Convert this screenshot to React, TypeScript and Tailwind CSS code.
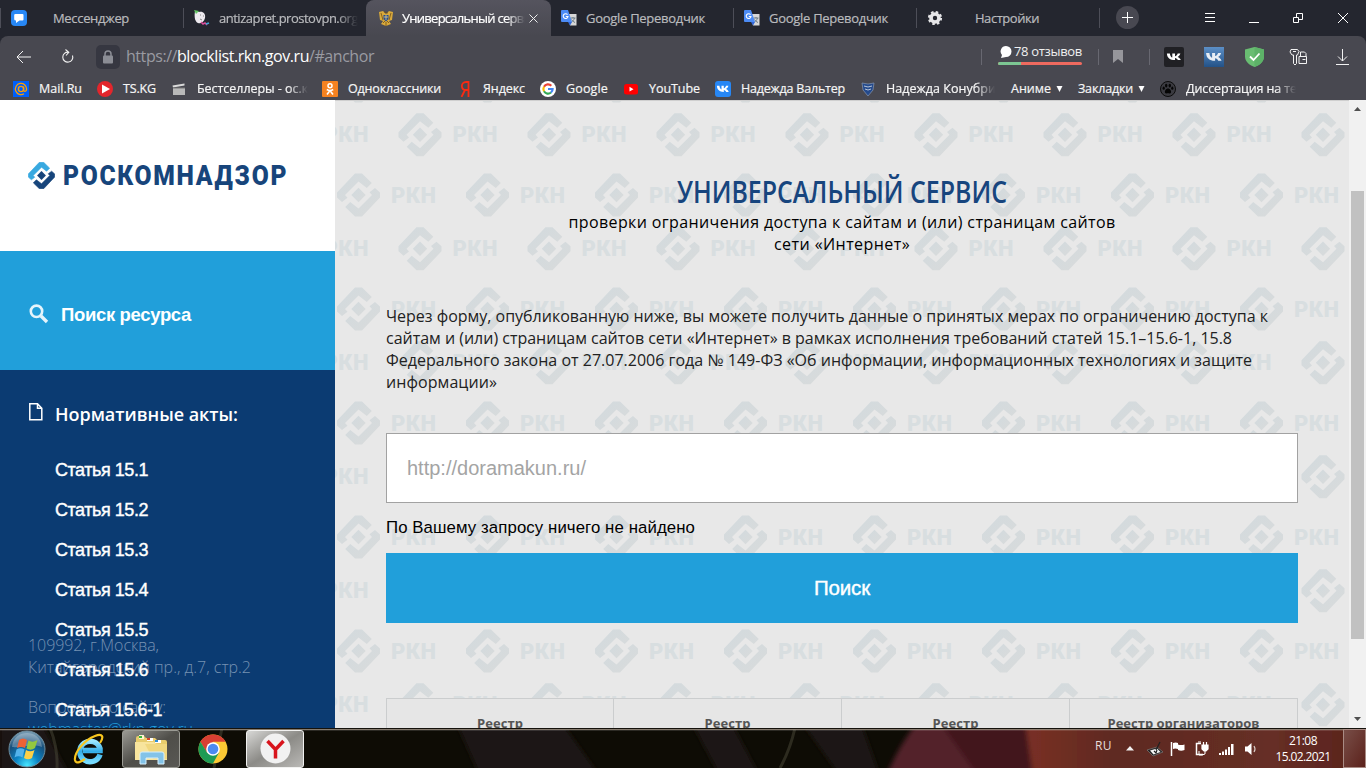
import { useLayoutEffect, useRef, useState } from "react";
import type { ReactNode } from "react";

const MARK_TOP = "M-16.5 7L-21.5 2.5V-2.5L-3.5-21.5H3.5L13.3-12L8.3-7L0-13.5L-13.5 0L-11 2.8Z";
const MARK_BOTTOM = "M16.5-7L21.5-2.5V2.5L3.5 21.5H-3.5L-13.3 12L-8.3 7L0 13.5L13.5 0L11-2.8Z";
const MARK_CORE = "M0-7.2L7.2 0L0 7.2L-7.2 0Z";

/* Keeps a label at a fixed width by spreading the difference over its letters. */
function Fit({ w, text, children, className = "" }: { w: number; text: string; children?: ReactNode; className?: string }) {
  const ref = useRef<HTMLSpanElement>(null);
  const [gap, setGap] = useState(0);
  useLayoutEffect(() => {
    if (ref.current) setGap((w - ref.current.getBoundingClientRect().width) / text.length);
  }, []);
  return (
    <span ref={ref} className={`inline-block whitespace-pre ${className}`} style={{ letterSpacing: gap }}>
      {children ?? text}
    </span>
  );
}

function MarkIcon({ className }: { className: string }) {
  return (
    <svg className={className} viewBox="-22 -22 44 44">
      <path d={MARK_TOP} fill="#38a9e0" stroke="#38a9e0" strokeLinejoin="round" />
      <path d={MARK_BOTTOM} fill="#17457b" stroke="#17457b" strokeLinejoin="round" />
      <path d={MARK_CORE} fill="#17457b" />
    </svg>
  );
}

function PatternUnit({ x, y }: { x: number; y: number }) {
  return (
    <g transform={`translate(${x} ${y})`} fill="url(#tint)">
      <path d={MARK_TOP} />
      <path d={MARK_BOTTOM} />
      <path d={MARK_CORE} />
      <text x="32.5" y="7.500" fontFamily="Roboto" fontWeight="900" fontSize="22" textLength="45" fill="#d8dee0">
        РКН
      </text>
    </g>
  );
}

function Backdrop() {
  const rows = [-19, 95, 209, 323, 437, 551];
  const cols = [-1, 0, 1, 2, 3, 4, 5, 6, 7];
  return (
    <svg className="absolute inset-0 h-full w-full" viewBox="0 0 1014 628" preserveAspectRatio="none" aria-hidden="true">
      <defs>
        <linearGradient id="tint" x1="0" y1="0" x2="1" y2="1">
          <stop offset="0" stopColor="#d2dade" />
          <stop offset="1" stopColor="#d9dbdb" />
        </linearGradient>
      </defs>
      {rows.map((y) =>
        cols.map((c) => (
          <g key={`${y}-${c}`}>
            <PatternUnit x={23.5 + c * 129} y={y} />
            <PatternUnit x={85 + c * 129} y={y + 53.8} />
          </g>
        ))
      )}
      <path d="M0 .5H1014" stroke="#cfcfcf" />
    </svg>
  );
}

const Translate = () => (
  <svg className="h-4 w-4 shrink-0" viewBox="0 0 16 16">
    <path d="M6 4h9.5v11.5H9z" fill="#d7d7d7" />
    <path d="M9.5 8h5M12 7v1M13.5 8c-.5 2-2 3.500-3 4M10.500 9.500c1 1.500 2 2.300 3.500 3" stroke="#6d7c86" fill="none" />
    <path d="M1 0h6l4 12H1a1 1 0 0 1-1-1V1a1 1 0 0 1 1-1z" fill="#4c8bf5" />
    <path d="M7 12h4l-2 3.500z" fill="#3367d6" />
    <path d="M6.500 4.600A2.400 2.400 0 1 0 7 6.500H4.800" stroke="#fff" strokeWidth="1.100" fill="none" />
  </svg>
);

const VkPath = "M2 6h2.200c.1 2 1 3.200 1.800 3.400V6h2v2.300c1-.2 1.700-1.300 2-2.300h2c-.3 1.300-1.100 2.300-2 2.900 1 .5 1.900 1.300 2.300 2.700h-2.200c-.4-1-1.100-1.600-2.100-1.800v1.800C4.600 11.700 2.100 9.800 2 6z";

const TS = ({ className = "" }: { className?: string }) => <span className={`h-5 w-px shrink-0 bg-[#4d4e58] ${className}`} />;

function TabBar() {
  return (
    <div className="flex h-9 items-center bg-[#24262f] text-[13px] text-[#b9babd] [-webkit-text-stroke:0.2px_currentColor]">
      <div className="flex h-full w-[183px] items-center">
        <TS />
        <svg className="ml-[10px] h-4 w-4" viewBox="0 0 16 16">
          <rect width="16" height="16" rx="4" fill="#2787f5" />
          <path d="M4.500 4h7q1 0 1 1v4.500q0 1-1 1H8.500L5 13v-2.500q-1.800 0-1.800-1.200V5Q3.200 4 4.500 4z" fill="#fff" />
        </svg>
        <Fit w={76} text="Мессенджер" className="ml-[26px] pt-px" />
      </div>
      <div className="flex h-full w-[183px] items-center">
        <TS />
        <svg className="ml-[10px] h-4 w-4" viewBox="0 0 16 16">
          <path d="M1 1l4 1c4-1 7 2 6 6s-4 6-7 5S0 7 1 1z" fill="#eeeaf0" />
          <path d="M0 0l5 1-3 3z" fill="#65c665" />
          <path d="M7 12l2 2 2-1 2 2" stroke="#d84b98" strokeWidth="1.500" fill="none" />
          <path d="M12 14l3-1" stroke="#3ca8d8" strokeWidth="1.500" />
          <path d="M6 5h1M9 6h1M6 9l2 1" stroke="#888" />
        </svg>
        <div className="ml-[9px] w-[139px] overflow-hidden pt-px [mask-image:linear-gradient(to_right,#000_85%,transparent)]">
          <Fit w={139} text="antizapret.prostovpn.org" />
        </div>
      </div>
      <div className="flex h-full w-[185px] items-center rounded-t-lg bg-linear-to-b from-[#55545e] to-[#484850] text-white">
        <svg className="ml-3 h-4 w-4" viewBox="0 0 16 16">
          <path d="M8 4L5 1 1 2l1 8 3 1-2 3 5 2 5-2-2-3 3-1 1-8-4-1z" fill="#d9a93b" />
          <path d="M3 3l2 7M13 3l-2 7M8 12v4M5 13l2-2M11 13l-2-2M6 2l4 1" stroke="#6d4e16" strokeWidth=".8" />
          <path d="M5.500 5h5v4L8 11.500 5.500 9z" fill="#234b91" />
          <path d="M8 5v5M6 7h4" stroke="#e9d18a" strokeWidth=".8" />
        </svg>
        <div className="ml-2 w-[123px] overflow-hidden pt-px [mask-image:linear-gradient(to_right,#000_85%,transparent)]">
          <Fit w={129} text="Универсальный серви" />
        </div>
        <svg className="ml-[4px] h-[9px] w-[9px]" viewBox="0 0 9 9">
          <path d="M.5.5l8 8M8.500.5l-8 8" stroke="#eee" />
        </svg>
      </div>
      <div className="flex h-full w-[181px] items-center pl-[10px]">
        <Translate />
        <Fit w={119} text="Google Переводчик" className="ml-[9px] pt-px" />
      </div>
      <div className="flex h-full w-[184px] items-center">
        <TS className="ml-px" />
        <span className="ml-[10px] flex items-center">
          <Translate />
          <Fit w={119} text="Google Переводчик" className="ml-[9px] pt-px" />
        </span>
      </div>
      <div className="flex h-full w-[183px] items-center">
        <TS />
        <svg className="ml-[10px] h-4 w-4" viewBox="-8 -8 16 16">
          <circle r="4" fill="none" stroke="#e6e6e8" strokeWidth="3.600" />
          <circle r="6" fill="none" stroke="#e6e6e8" strokeWidth="2.200" strokeDasharray="2.500 2.212" />
        </svg>
        <Fit w={64} text="Настройки" className="ml-8 pt-px" />
      </div>
      <TS />
      <svg className="ml-4 h-6 w-6" viewBox="0 0 24 24">
        <circle cx="11.500" cy="11.500" r="11.500" fill="#484851" />
        <path d="M6 11.500h11M11.500 6v11" stroke="#fff" />
      </svg>
      <svg className="ml-[64px] h-3 w-[12px]" viewBox="0 0 12 12">
        <path d="M1 1.500h10M1 5.500h10M1 9.500h10" stroke="#fff" />
      </svg>
      <svg className="ml-[33px] h-3 w-[11px]" viewBox="0 0 11 12">
        <path d="M0 10.500h10" stroke="#fff" />
      </svg>
      <svg className="ml-[33px] h-[10px] w-[10px]" viewBox="0 0 10 10">
        <path d="M.5 4.500h5v5h-5zM3.500 4V.5h6v6H6" stroke="#fff" fill="none" />
      </svg>
      <svg className="ml-[35px] h-[10px] w-[10px]" viewBox="0 0 10 10">
        <path d="M0 0l10 10M10 0L0 10" stroke="#fff" />
      </svg>
    </div>
  );
}

function Toolbar() {
  return (
    <div className="flex h-[41px] items-center text-[#f0f0f0]">
      <svg className="ml-[16px] h-[14px] w-[15px]" viewBox="0 0 15 14">
        <path d="M15 7H1M7 1L1 7l6 6" stroke="#f2f2f2" fill="none" />
      </svg>
      <svg className="ml-[30px] h-[15px] w-[13px]" viewBox="0 0 13 15">
        <path d="M11.500 6.500A5 5 0 1 1 7.500 3.200M4.500.5L7.800 3.300 5 6.500" stroke="#f2f2f2" strokeWidth="1.100" fill="none" />
      </svg>
      <div className="ml-[22px] flex h-6 w-6 items-center justify-center rounded-[5px] bg-[#363741]">
        <svg className="h-[14px] w-[12px]" viewBox="0 0 12 14">
          <path d="M3 6V4a3 3 0 0 1 6 0v2" stroke="#8b8d95" strokeWidth="1.500" fill="none" />
          <rect x="1" y="5.500" width="10" height="8" rx="1" fill="#8b8d95" />
        </svg>
      </div>
      <div className="ml-[6px] w-[855px] pb-px text-[16px] leading-6 text-[#9a9ba2]">
        <Fit w={248} text="https://blocklist.rkn.gov.ru/#anchor">
          https://<span className="text-white">blocklist.rkn.gov.ru</span>/#anchor
        </Fit>
      </div>
      <span className="h-4 w-px bg-[#686871]" />
      <div className="ml-4 flex w-[84px] flex-col pb-[5px]">
        <div className="flex h-[17px] items-center gap-[2px]">
          <svg className="ml-[2px] h-3 w-3 shrink-0" viewBox="0 0 12 12">
            <path d="M6 0a5.500 5.500 0 0 1 0 11L1 12l1-3A5.400 5.400 0 0 1 6 0z" fill="#fff" />
          </svg>
          <Fit w={68} text="78 отзывов" className="text-[13px] font-medium" />
        </div>
        <div className="mt-[1px] flex h-[3px] overflow-hidden rounded-full bg-[#ee6a5f]">
          <span className="w-[23px] bg-[#7cc693]" />
        </div>
      </div>
      <span className="ml-4 h-4 w-px bg-[#686871]" />
      <svg className="ml-[14px] h-[13px] w-[10px]" viewBox="0 0 10 13">
        <path d="M0 0h10v13L5 9l-5 4z" fill="#96969b" />
      </svg>
      <span className="ml-[26px] h-4 w-px bg-[#686871]" />
      <svg className="ml-[14px] h-5 w-5" viewBox="0 0 20 20">
        <rect width="20" height="20" rx="2" fill="#202024" />
        <path d={VkPath} fill="#fff" transform="translate(.2 -.8) scale(1.350 1.200)" />
      </svg>
      <svg className="ml-5 h-5 w-5" viewBox="0 0 20 20">
        <defs>
          <linearGradient id="vkblue" x2="0" y2="1">
            <stop stopColor="#5c8fc6" />
            <stop offset="1" stopColor="#235288" />
          </linearGradient>
        </defs>
        <rect width="20" height="20" fill="url(#vkblue)" />
        <path d={VkPath} fill="#e8eef5" transform="translate(-.9 -2.500) scale(1.500 1.400)" />
      </svg>
      <svg className="ml-[21px] h-5 w-[19px]" viewBox="0 0 19 20">
        <path d="M9.500 0L19 2.500v7C19 15 14 18.500 9.500 20 5 18.500 0 15 0 9.500v-7z" fill="#69bd72" />
        <path d="M9.500 0L19 2.500v7C19 15 14 18.500 9.500 20z" fill="#5db268" />
        <path d="M5 9.500l3.500 3.500L14.500 6.500" stroke="#fff" strokeWidth="1.800" fill="none" />
      </svg>
      <svg className="ml-[25px] h-[18px] w-[19px]" viewBox="0 0 19 18">
        <path d="M2 1.500h6.500l1.500 2-1.500 3.500H7.500v8.500L6 17l-1.500-1.500V7H3L1 4zM4 3.500h3" stroke="#f2f2f2" fill="none" />
        <path d="M10 8.500h7.500v7H10zM11.500 8.500V4h4l1.500 1.500v3M13.500 11.500h3" stroke="#f2f2f2" fill="none" />
      </svg>
      <svg className="ml-[28px] h-4 w-[13px]" viewBox="0 0 13 16">
        <path d="M6.500 0v12M2 7.500L6.500 12 11 7.500M0 15.500h13" stroke="#f2f2f2" fill="none" />
      </svg>
    </div>
  );
}

function Bookmark({ icon, label, w, pad, width, fade = false, show = w }: { icon: ReactNode; label: string; w: number; pad: number; width: number; fade?: boolean; show?: number }) {
  return (
    <div className="flex shrink-0 items-center" style={{ width }}>
      <span className="flex h-4 w-4 shrink-0 items-center justify-center" style={{ marginRight: pad }}>{icon}</span>
      <div
        className={fade ? "overflow-hidden pt-px [mask-image:linear-gradient(to_right,#000_82%,transparent)]" : "pt-px"}
        style={{ width: show }}
      >
        <Fit w={w} text={label} />
      </div>
    </div>
  );
}

function Bookmarks() {
  return (
    <div className="flex h-[23px] items-center overflow-hidden pl-[13px] text-[12.500px] text-[#f5f5f5] [-webkit-text-stroke:0.2px_currentColor]">
      <Bookmark label="Mail.Ru" w={43} pad={10} width={84} icon={
        <svg className="h-4 w-4" viewBox="-1 -1 16 16"><rect x="-1" y="-1" width="16" height="16" fill="#005ff9" /><circle cx="7" cy="7" r="2.600" fill="none" stroke="#ff9e00" strokeWidth="1.400" /><path d="M9.600 4.500V8c0 2 3 2 3-1A5.600 5.600 0 1 0 10 11.700" fill="none" stroke="#ff9e00" strokeWidth="1.300" /></svg>} />
      <Bookmark label="TS.KG" w={33} pad={10} width={74} icon={
        <svg viewBox="0 0 16 16"><circle cx="8" cy="8" r="8" fill="#e3262c" /><path d="M5 3.500L13 8l-8 4.500z" fill="#fff" /></svg>} />
      <Bookmark label="Бестселлеры - ос.ки" w={119} show={111} fade pad={10} width={151} icon={
        <svg viewBox="0 0 16 16"><path d="M2 7h12v7H2z" fill="#b9b9b9" /><path d="M1.500 4.500L13.500 2.500v2L2 6.500z" fill="#dadada" /><path d="M2 7h12" stroke="#777" /></svg>} />
      <Bookmark label="Одноклассники" w={93} pad={10} width={136} icon={
        <svg viewBox="0 0 16 16"><rect width="16" height="16" rx="1" fill="#f58220" /><circle cx="8" cy="4.800" r="2" fill="none" stroke="#fff" strokeWidth="1.500" /><path d="M4.800 8.500q3.200 2 6.400 0M8 9.500L5 13.500M8 9.500l3 4" stroke="#fff" strokeWidth="1.600" fill="none" /></svg>} />
      <Bookmark label="Яндекс" w={42} pad={9} width={82} icon={
        <svg viewBox="0 0 16 16"><path d="M10.500 0v16M10.500 1H8C2.500 1 2.500 9 8 9h2.500M7 9l-3.500 7" stroke="#fa2a12" strokeWidth="1.800" fill="none" /></svg>} />
      <Bookmark label="Google" w={42} pad={10} width={83} icon={
        <svg viewBox="0 0 16 16"><circle cx="8" cy="8" r="8" fill="#fff" /><g fill="none" strokeWidth="2.200"><path d="M11.300 4.700A4.600 4.600 0 0 0 4 5.700" stroke="#ea4335" /><path d="M4 5.700a4.600 4.600 0 0 0 0 4.600" stroke="#fbbc05" /><path d="M4 10.300a4.600 4.600 0 0 0 7 1.200" stroke="#34a853" /><path d="M11 11.500A4.500 4.500 0 0 0 12.600 8H8" stroke="#4285f4" /></g></svg>} />
      <Bookmark label="YouTube" w={51} pad={10} width={92} icon={
        <svg viewBox="0 0 16 16"><rect x="1" y="3" width="14" height="10.500" rx="2.500" fill="#f00" /><path d="M6.500 5.800l4 2.400-4 2.400z" fill="#fff" /></svg>} />
      <Bookmark label="Надежда Вальтер" w={104} pad={10} width={145} icon={
        <svg viewBox="0 0 16 16"><rect width="16" height="16" rx="3" fill="#2787f5" /><path d={VkPath} fill="#fff" transform="translate(-.4 -1.800) scale(1.150 1.100)" /></svg>} />
      <Bookmark label="Надежда Конубри" w={110} show={109} fade pad={10} width={151} icon={
        <svg viewBox="0 0 16 16"><path d="M2 2l6 1 6-1-1 7-5 6-5-6z" fill="#244a8c" stroke="#8797b0" strokeWidth=".7" /><path d="M4 5l4 1 4-1M5 8l3 1 3-1" stroke="#c7d1e0" strokeWidth=".9" fill="none" /></svg>} />
      <div className="flex w-[67px] shrink-0 items-center gap-[5px]">
        <Fit w={40} text="Аниме" className="pt-px" />
        <svg className="h-[6px] w-[7px]" viewBox="0 0 7 6"><path d="M.5 0h6l-3 6z" fill="#fff" /></svg>
      </div>
      <div className="flex w-[82px] shrink-0 items-center gap-[5px]">
        <Fit w={55} text="Закладки" className="pt-px" />
        <svg className="h-[6px] w-[7px]" viewBox="0 0 7 6"><path d="M.5 0h6l-3 6z" fill="#fff" /></svg>
      </div>
      <Bookmark label="Диссертация на те" w={111} show={110} fade pad={10} width={140} icon={
        <svg viewBox="0 0 16 16"><circle cx="8" cy="8" r="7.500" fill="#3a3a40" stroke="#0c0c0c" /><path d="M8 7.500c2 0 3.500 2.500 3 4s-2 .8-3 .8-2.500.7-3-.8 1-4 3-4z" fill="#050505" /><ellipse cx="6.200" cy="4.600" rx="1.200" ry="1.900" fill="#050505" /><ellipse cx="9.800" cy="4.600" rx="1.200" ry="1.900" fill="#050505" /><ellipse cx="3.700" cy="7.200" rx="1.100" ry="1.600" fill="#050505" /><ellipse cx="12.300" cy="7.200" rx="1.100" ry="1.600" fill="#050505" /></svg>} />
    </div>
  );
}

const articles = ["Статья 15.1", "Статья 15.2", "Статья 15.3", "Статья 15.4", "Статья 15.5", "Статья 15.6"];

function Sidebar() {
  return (
    <aside className="relative flex w-[335px] shrink-0 flex-col overflow-hidden bg-[#0b3b72] text-white">
      <div className="flex h-[151px] shrink-0 items-center bg-white pl-[28px]">
        <MarkIcon className="h-[27px] w-[27px]" />
        <svg className="ml-2 h-8 w-[228px]" viewBox="0 0 228 32">
          <text transform="scale(.88 1)" x="0" y="25.500" fontFamily="Roboto" fontWeight="900" fontSize="28" textLength="254" fill="#17457b">
            РОСКОМНАДЗОР
          </text>
        </svg>
      </div>
      <div className="flex h-[119px] shrink-0 items-center bg-[#219fda] pt-[6px] pl-[29px]">
        <svg className="h-5 w-5" viewBox="0 0 20 20">
          <circle cx="7.500" cy="7.300" r="5.700" fill="none" stroke="#e5f4fb" strokeWidth="2.600" />
          <path d="M12 12l6 6" stroke="#e5f4fb" strokeWidth="3.400" />
        </svg>
        <Fit w={130} text="Поиск ресурса" className="ml-3 pt-[2px] font-['Liberation_Sans',sans-serif] text-[18.500px] font-bold" />
      </div>
      <div className="flex h-[80px] shrink-0 items-center pt-[7px] pl-[29px]">
        <svg className="mb-1 h-[18px] w-[14px]" viewBox="0 0 14 18">
          <path d="M.8.8H8.500l4.300 4.500v11.500H.8zM8.500.8v4.500h4.300" stroke="#fff" strokeWidth="1.500" fill="none" />
        </svg>
        <Fit w={183} text="Нормативные акты:" className="ml-3 pt-[2px] text-[18px] font-semibold" />
      </div>
      <ul className="relative z-10 flex flex-col pl-[55px] font-['Liberation_Sans',sans-serif] text-[18px] [-webkit-text-stroke:0.4px_white]">
        {articles.map((a) => (
          <li key={a} className="flex h-10 items-center pt-px">
            <Fit w={93} text={a} />
          </li>
        ))}
        <li className="flex h-10 items-center pt-px"><Fit w={107} text="Статья 15.6-1" /></li>
      </ul>
      <div className="absolute top-[534px] left-[28px] text-[16px] leading-[22px] font-light text-[#7692b3]">
        <p><Fit w={131} text="109992, г.Москва," /></p>
        <p><Fit w={223} text="Китайгородский пр., д.7, стр.2" /></p>
        <p className="mt-[18px]"><Fit w={138} text="Вопросы по сайту:" /></p>
        <p className="text-[#219fda]"><Fit w={165} text="webmaster@rkn.gov.ru" /></p>
      </div>
    </aside>
  );
}

function Content() {
  return (
    <main className="relative w-[1014px] shrink-0 overflow-hidden bg-[#e8e8e8]">
      <Backdrop />
      <div className="relative flex flex-col pr-[51px] pl-[51px]">
        <div className="mt-[77px] flex h-[30px] items-center justify-center">
          <svg className="h-[36px] w-[334px] shrink-0" viewBox="0 0 334 36">
            <text x="2" y="29" fontFamily="Open Sans" fontWeight="600" fontSize="31" textLength="330" lengthAdjust="spacingAndGlyphs" fill="#17457e">
              УНИВЕРСАЛЬНЫЙ СЕРВИС
            </text>
          </svg>
        </div>
        <div className="mt-[4px] flex flex-col items-center text-[16px] leading-[22px] text-black">
          <Fit w={547} text="проверки ограничения доступа к сайтам и (или) страницам сайтов" />
          <Fit w={136} text="сети «Интернет»" />
        </div>
        <div className="mt-[50px] flex flex-col items-start text-[16px] leading-[22px] text-[#222]">
          <Fit w={882} text="Через форму, опубликованную ниже, вы можете получить данные о принятых мерах по ограничению доступа к" />
          <Fit w={846} text="сайтам и (или) страницам сайтов сети «Интернет» в рамках исполнения требований статей 15.1–15.6-1, 15.8" />
          <Fit w={866} text="Федерального закона от 27.07.2006 года № 149-ФЗ «Об информации, информационных технологиях и защите" />
          <Fit w={111} text="информации»" />
        </div>
        <div className="mt-[40px] flex h-[70px] items-center border border-[#a2a2a2] bg-white pl-5 font-['Liberation_Sans',sans-serif] text-[20px] text-[#a4a4a4]">
          <Fit w={179} text="http://doramakun.ru/" />
        </div>
        <div className="flex h-[50px] items-center font-['Liberation_Sans',sans-serif] text-[16.800px] text-black">
          <Fit w={309} text="По Вашему запросу ничего не найдено" />
        </div>
        <button className="flex h-[70px] items-center justify-center bg-[#219fda] font-['Liberation_Sans',sans-serif] text-[20.500px] text-white [-webkit-text-stroke:0.4px_white]">
          <Fit w={56} text="Поиск" />
        </button>
        <div className="mt-[75px] grid h-[60px] grid-cols-[227px_228px_228px_228px] border-t border-l border-[#cbcdce] bg-[#e6e6e6] text-[13px] leading-5 font-bold text-[#555]">
          <div className="flex justify-center border-r border-[#cbcdce] pt-[14px]"><Fit w={46} text="Реестр" /></div>
          <div className="flex justify-center border-r border-[#cbcdce] pt-[14px]"><Fit w={46} text="Реестр" /></div>
          <div className="flex justify-center border-r border-[#cbcdce] pt-[14px]"><Fit w={46} text="Реестр" /></div>
          <div className="flex justify-center border-r border-[#cbcdce] pt-[14px]"><Fit w={152} text="Реестр организаторов" /></div>
        </div>
      </div>
    </main>
  );
}

function Scrollbar() {
  return (
    <div className="flex w-[17px] shrink-0 flex-col items-center bg-[#f1f1f1]">
      <svg className="mt-[7px] h-[4px] w-[7px]" viewBox="0 0 7 4"><path d="M0 4L3.500 0 7 4z" fill="#505050" /></svg>
      <div className="mt-[80px] h-[448px] w-[13px] bg-[#c1c1c1]" />
      <svg className="mt-[78px] h-[4px] w-[7px]" viewBox="0 0 7 4"><path d="M0 0L3.500 4 7 0z" fill="#505050" /></svg>
    </div>
  );
}

function Wallpaper() {
  return (
    <svg className="absolute inset-0 h-full w-full" viewBox="0 0 1366 40" preserveAspectRatio="none" aria-hidden="true">
      <defs>
        <linearGradient id="rust">
          <stop stopColor="#7a3025" />
          <stop offset=".25" stopColor="#5e2a22" />
          <stop offset=".7" stopColor="#662e25" />
          <stop offset="1" stopColor="#56201b" />
        </linearGradient>
        <filter id="soft" x="-5%" y="-50%" width="110%" height="200%"><feGaussianBlur stdDeviation="2.500" /></filter>
      </defs>
      <rect width="1366" height="40" fill="#0e0c05" />
      <g filter="url(#soft)">
        <path d="M0-8H40L70 48H0zM455-8H560L600 48H480zM690-8H730L760 48H720zM800-8H860L880 48H840z" fill="#1b1912" />
        <path d="M919-8Q900 15 886 48H1050L1030-8z" fill="#522429" />
        <path d="M938-8L978 48H1044V-8z" fill="#43141e" />
        <path d="M1025-8L1033 48H1380V-8z" fill="url(#rust)" />
      </g>
      <path d="M50 0Q58 20 57 40M795 0Q790 22 780 40M222 0L214 40" stroke="#4b4a3a" strokeWidth="3" fill="none" opacity=".5" />
      <path d="M0 .5H1366" stroke="#15120c" />
      <path d="M0 1.500H1366" stroke="#93887a" opacity=".9" />
      <path d="M0 2.500H1366" stroke="#fff" opacity=".12" />
    </svg>
  );
}

function Taskbar() {
  return (
    <footer className="relative h-10 overflow-hidden">
      <Wallpaper />
      <div className="relative flex h-full items-center pt-px text-white">
        <svg className="ml-[8px] h-[38px] w-[38px] shrink-0" viewBox="0 0 38 38">
          <defs>
            <radialGradient id="orb" cy=".95" r=".95">
              <stop stopColor="#47e7ff" />
              <stop offset=".35" stopColor="#0b83c4" />
              <stop offset=".7" stopColor="#174f7b" />
              <stop offset="1" stopColor="#7fa2b8" />
            </radialGradient>
          </defs>
          <circle cx="19" cy="19" r="18" fill="url(#orb)" stroke="#6d8d9e" />
          <path d="M4 17C5 7 12 3 19 3s14 4 15 14C25 13 13 18 4 17z" fill="#fff" opacity=".28" />
          <path d="M11 10q4-3 8 0l-2 8q-4-2-8 0z" fill="#ed6136" />
          <path d="M20.500 10.500q4 2.500 9-.5l-2.500 8q-4 3-8.500.5z" fill="#93c83f" />
          <path d="M8.500 19.500q4-2.500 8 0l-2 8q-4-2.500-8 0z" fill="#53b3eb" />
          <path d="M18 20q4 2.500 8.500 0l-2.500 8q-4 2.500-8 0z" fill="#fdd047" />
        </svg>
        <svg className="ml-[27px] h-[32px] w-[32px] shrink-0" viewBox="0 0 32 32">
          <defs><linearGradient id="ie" x2="0" y2="1"><stop stopColor="#9be7ff" /><stop offset=".5" stopColor="#33aee9" /><stop offset="1" stopColor="#78dcff" /></linearGradient></defs>
          <path d="M27 21.500A10.300 10.300 0 1 1 27 15.500L27 17.500H10" fill="none" stroke="url(#ie)" strokeWidth="5.500" />
          <path d="M27 10C31 4 30 0 22 3 11 7 1 20 2 27c1 5 7 1 10-1" fill="none" stroke="#f7c51e" strokeWidth="2.200" />
        </svg>
        <div className="ml-[17px] flex h-[38px] w-[58px] shrink-0 items-center justify-center rounded-[3px] border border-[#9b9b94] bg-linear-to-br from-[#9b9a94] via-[#4f4e49] to-[#595854]">
          <svg className="h-[32px] w-[36px]" viewBox="0 0 36 32">
            <path d="M3 5q0-2 2-2h6l2 2h9l2 2h8q2 0 2 2v17H3z" fill="#e8cc6c" />
            <path d="M6 2h5v4H6z" fill="#fff5d0" /><path d="M6 3h3v2H6z" fill="#35b63b" />
            <path d="M14 5h6v3h-6z" fill="#fff" /><path d="M14 5h3v2h-3z" fill="#d5422b" />
            <path d="M22 7h6v3h-6z" fill="#fff" /><path d="M22 7h3v2h-3z" fill="#2c8fd8" />
            <path d="M2 9h19l2 2h11v16H2z" fill="#f7e49d" />
            <path d="M12 11h22v15H20z" fill="#f0d77f" />
            <path d="M7 31V21q0-2 2-2h20q2 0 2 2v10h-6v-6H13v6z" fill="#83c3e8" stroke="#d5effc" />
          </svg>
        </div>
        <svg className="ml-[18px] h-[30px] w-[30px] shrink-0" viewBox="-15 -15 30 30">
          <circle r="14.500" fill="#fcc934" />
          <path d="M-12.560-7.250A14.500 14.500 0 0 1 12.560-7.250H0L-6.300 3.600z" fill="#d93f33" />
          <path d="M-12.560-7.250L-6 3.600 6 3.600 0 14.500A14.500 14.500 0 0 1-12.560-7.250z" fill="#1e9b54" />
          <circle r="6.800" fill="#fff" />
          <circle r="5.300" fill="#4c8bf0" />
        </svg>
        <div className="ml-[18px] flex h-[38px] w-[58px] shrink-0 items-center justify-center rounded-[3px] border border-[#f1f1f0] bg-linear-to-br from-[#d8d8d6] via-[#8c8b87] to-[#bab9b6]">
          <svg className="h-[31px] w-[31px]" viewBox="0 0 31 31">
            <circle cx="15.500" cy="15.500" r="15" fill="#f1f1f1" />
            <path d="M7.500 8L15.500 16.500 23.500 8M15.500 16v9.500" stroke="#d8141c" strokeWidth="3.500" fill="none" />
          </svg>
        </div>
        <div className="-mt-[6px] ml-[791px] w-[31px] shrink-0 text-[12px] text-[#e6ddd9]"><Fit w={17} text="RU" /></div>
        <svg className="h-[5px] w-2 shrink-0" viewBox="0 0 8 5"><path d="M0 4.500L4 0l4 4.500z" fill="#f2f2f2" /></svg>
        <svg className="ml-[12px] h-4 w-[18px] shrink-0" viewBox="0 0 18 16">
          <path d="M1 9l10-3 6 5-10 4z" fill="#222" stroke="#888" strokeWidth=".6" />
          <path d="M4 9.500l7-2 3.500 3.500-7 2.500z" fill="#f4f4f4" />
          <path d="M8 10l2 2 1-3M14 1l-4 8" stroke="#222" strokeWidth="1.200" fill="none" />
        </svg>
        <svg className="ml-[6px] h-4 w-4 shrink-0" viewBox="0 0 16 16">
          <path d="M1.500 1v14" stroke="#fff" strokeWidth="1.500" />
          <path d="M3 2q3-1 5 0v1.500q3 1 6.500 0V9Q11 10.500 8 9V8Q5 7 3 8z" fill="#fff" />
        </svg>
        <svg className="ml-[8px] h-4 w-[15px] shrink-0" viewBox="0 0 15 16">
          <path d="M7 2.500H2.500v11H9" fill="none" stroke="#fff" strokeWidth="1.500" />
          <path d="M4 1h3M8 4h6v4l-2 2h-2L8 8zM9.500 1v3M12.500 1v3" fill="#fff" stroke="#fff" strokeWidth="1.200" />
          <path d="M11 10v3l-3 1H5v-4" fill="none" stroke="#fff" />
        </svg>
        <svg className="ml-[10px] h-4 w-[15px] shrink-0" viewBox="0 0 15 16">
          <path d="M0 12h2v2H0zM3 10.500h2V14H3zM6 8.500h2V14H6zM9 6h2v8H9zM12 3h2.500v11H12z" fill="#fff" />
        </svg>
        <svg className="ml-[11px] h-[14px] w-[14px] shrink-0" viewBox="0 0 14 14">
          <path d="M0 4.500h2.500L6.500 1v12L2.500 9.500H0z" fill="#fff" />
          <path d="M9 4q2 3 0 6" stroke="#d8c9c5" fill="none" strokeWidth="1.200" />
        </svg>
        <div className="ml-[16px] flex w-[56px] shrink-0 flex-col items-center text-[12px] leading-4">
          <Fit w={28} text="21:08" />
          <Fit w={55} text="15.02.2021" />
        </div>
        <div className="ml-auto h-[39px] w-[23px] shrink-0 border border-[#a98b84] bg-linear-to-br from-[#784e48] to-[#5b211b]" />
      </div>
    </footer>
  );
}

export default function App() {
  return (
    <div className="flex h-[768px] w-[1366px] flex-col overflow-hidden bg-[#e8e8e8] font-['Open_Sans','Noto_Sans',sans-serif]">
      <header className="h-[100px] shrink-0 bg-[#24262f]">
        <TabBar />
        <div className="rounded-t-lg bg-[#484850]">
          <Toolbar />
          <Bookmarks />
        </div>
      </header>
      <div className="flex h-[628px] shrink-0">
        <Sidebar />
        <Content />
        <Scrollbar />
      </div>
      <Taskbar />
    </div>
  );
}
